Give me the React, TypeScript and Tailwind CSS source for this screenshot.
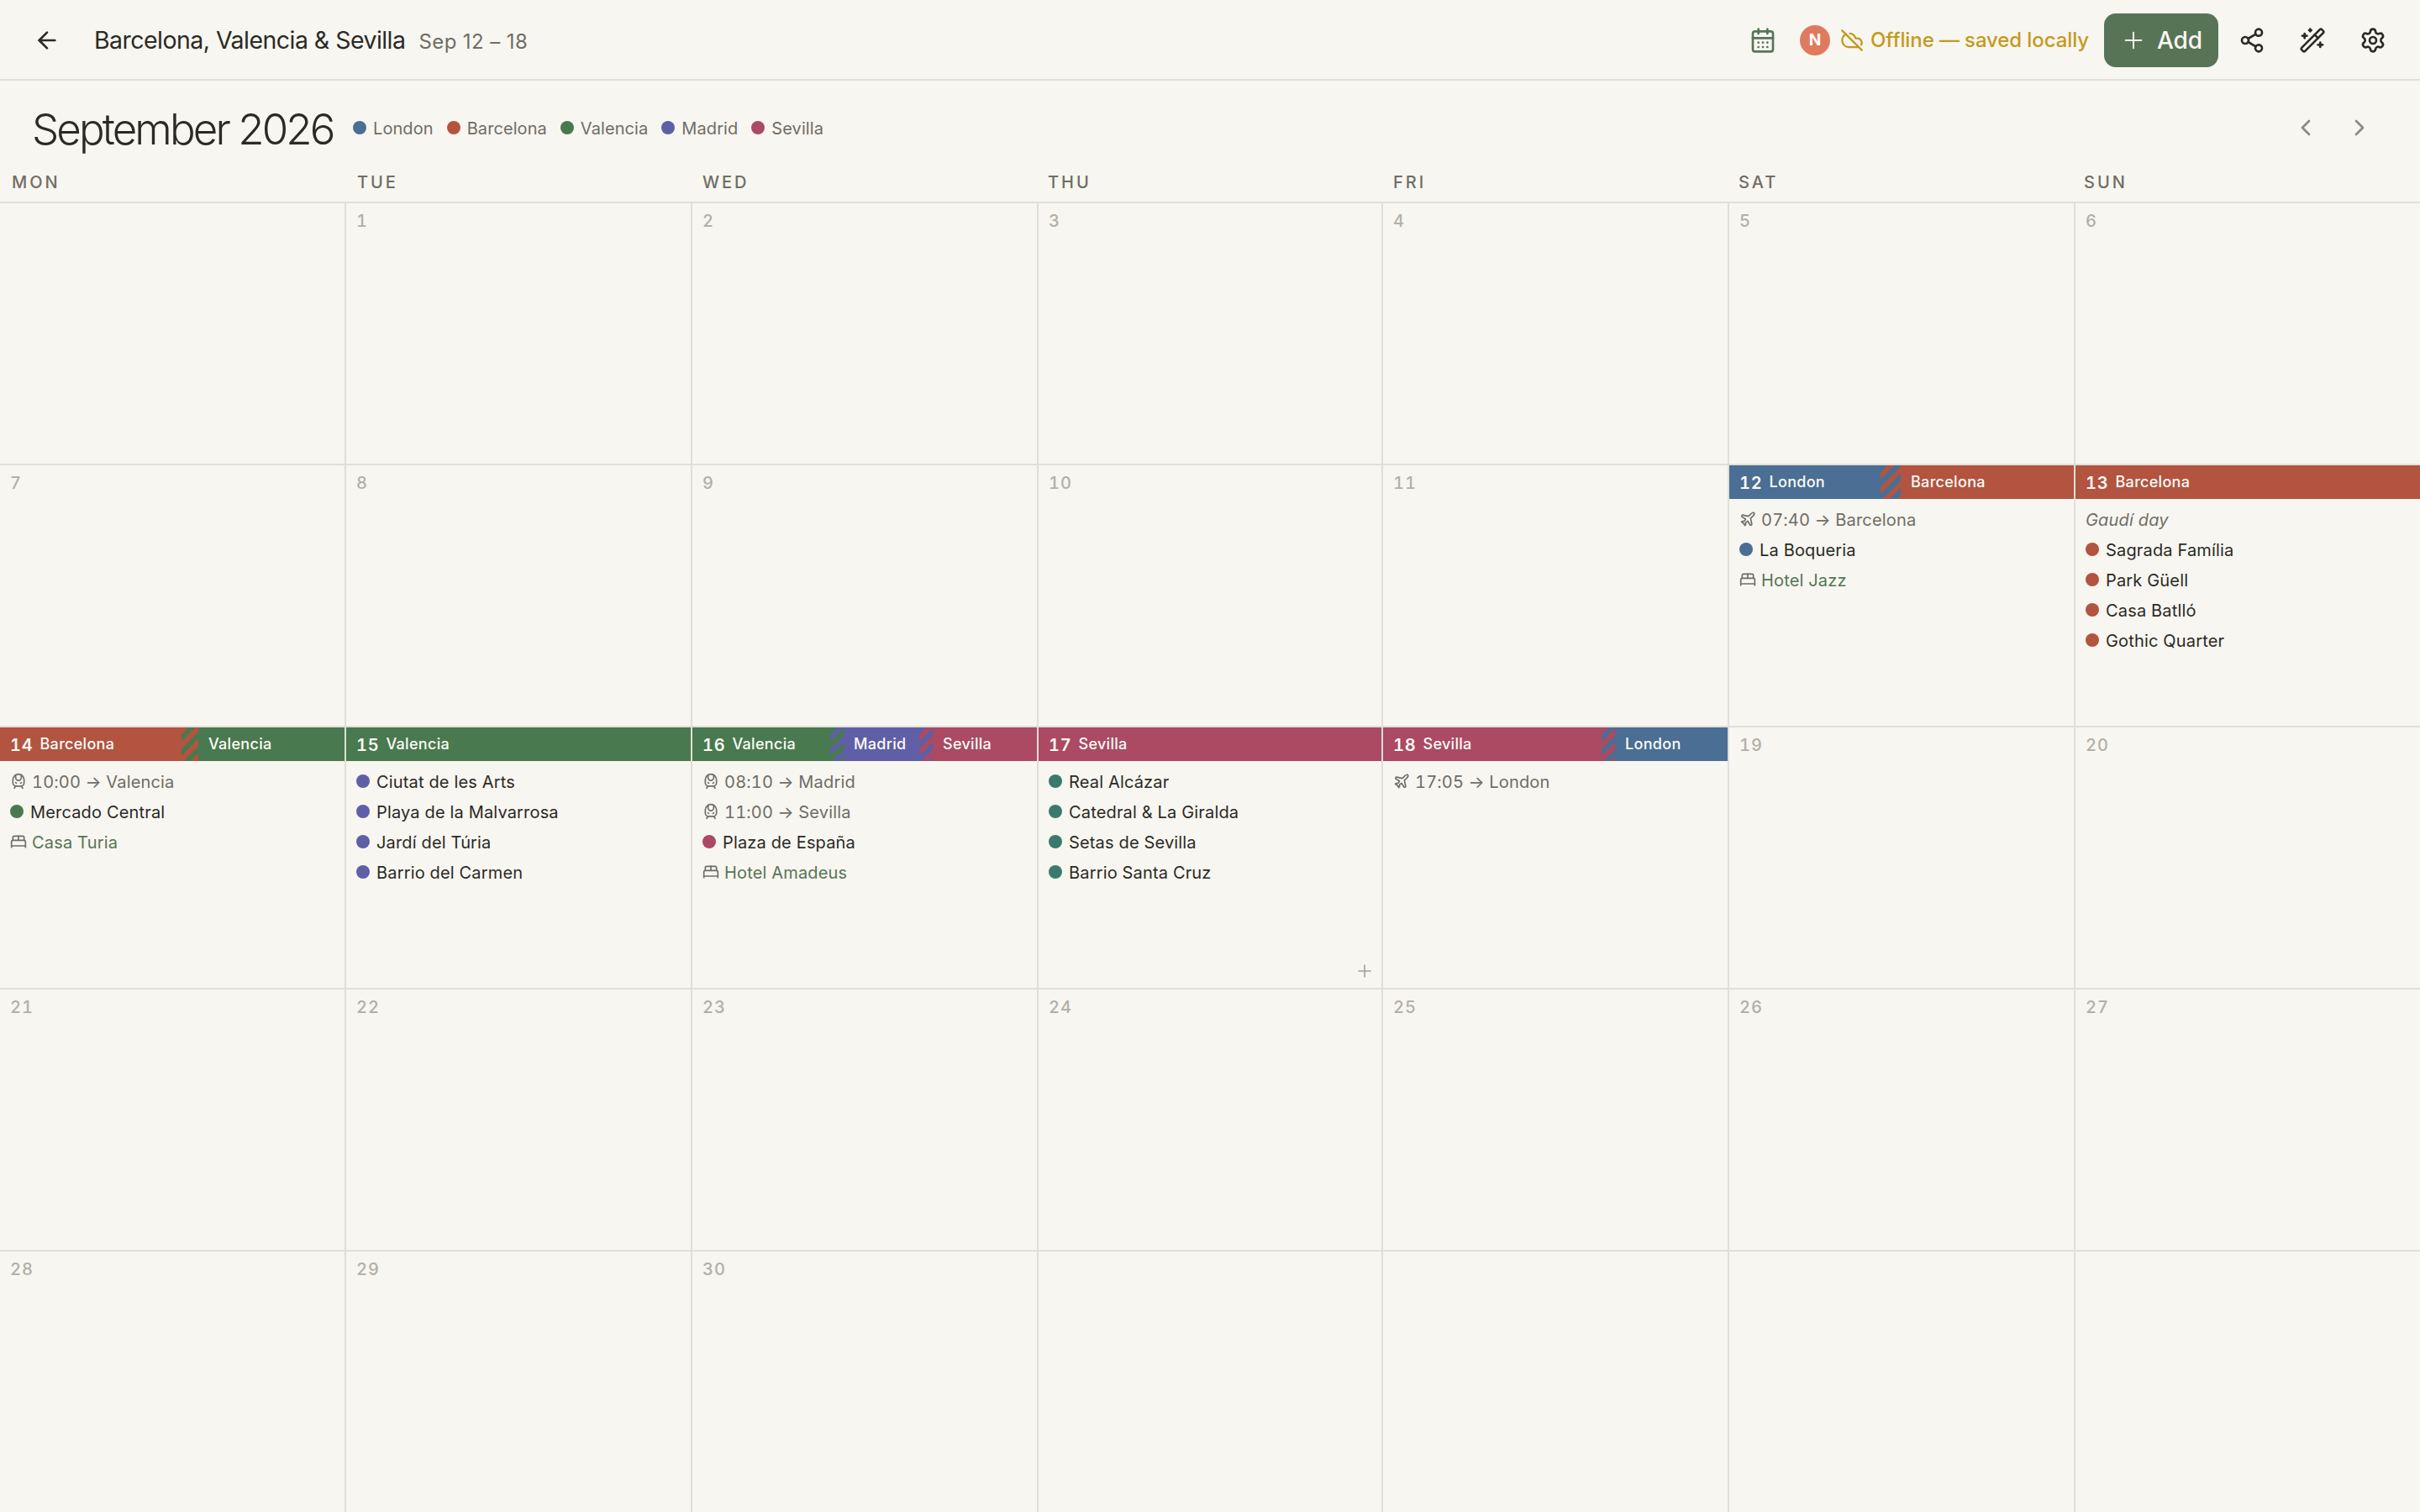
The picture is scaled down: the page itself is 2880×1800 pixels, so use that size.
import {
  ArrowLeft,
  BedDouble,
  CalendarDays,
  ChevronLeft,
  ChevronRight,
  CloudOff,
  Plane,
  Plus,
  Settings,
  Share2,
  TrainFront,
  WandSparkles,
} from "lucide-react";

type Segment = {
  city: string;
  bg: string;
  width: string;
  stripe?: string;
  from?: string;
  to?: string;
};

type Item = {
  kind: "flight" | "train" | "hotel" | "place" | "note";
  text: string;
  time?: string;
  dot?: string;
};

type TripDay = { segments: Segment[]; items: Item[] };

const blue = "bg-[#4b6e94]";
const red = "bg-[#b25440]";
const green = "bg-[#49794e]";
const purple = "bg-[#5f5fa8]";
const rose = "bg-[#ab4a62]";
const teal = "bg-[#3a7a6c]";

const weekdays = ["MON", "TUE", "WED", "THU", "FRI", "SAT", "SUN"];

const legend = [
  { name: "London", color: blue },
  { name: "Barcelona", color: red },
  { name: "Valencia", color: green },
  { name: "Madrid", color: purple },
  { name: "Sevilla", color: rose },
];

const hex = {
  blue: "#4b6e94",
  red: "#b25440",
  green: "#49794e",
  purple: "#5f5fa8",
  rose: "#ab4a62",
};

const place = (text: string, dot: string): Item => ({ kind: "place", text, dot });

const trip: Record<number, TripDay> = {
  12: {
    segments: [
      { city: "London", bg: blue, width: "w-[180px]" },
      { city: "Barcelona", bg: red, width: "flex-1", stripe: "w-[24px]", from: hex.blue, to: hex.red },
    ],
    items: [
      { kind: "flight", time: "07:40", text: "Barcelona" },
      place("La Boqueria", blue),
      { kind: "hotel", text: "Hotel Jazz" },
    ],
  },
  13: {
    segments: [{ city: "Barcelona", bg: red, width: "flex-1" }],
    items: [
      { kind: "note", text: "Gaudí day" },
      place("Sagrada Família", red),
      place("Park Güell", red),
      place("Casa Batlló", red),
      place("Gothic Quarter", red),
    ],
  },
  14: {
    segments: [
      { city: "Barcelona", bg: red, width: "w-[216px]" },
      { city: "Valencia", bg: green, width: "flex-1", stripe: "w-[20px]", from: hex.red, to: hex.green },
    ],
    items: [
      { kind: "train", time: "10:00", text: "Valencia" },
      place("Mercado Central", green),
      { kind: "hotel", text: "Casa Turia" },
    ],
  },
  15: {
    segments: [{ city: "Valencia", bg: green, width: "flex-1" }],
    items: [
      place("Ciutat de les Arts", purple),
      place("Playa de la Malvarrosa", purple),
      place("Jardí del Túria", purple),
      place("Barrio del Carmen", purple),
    ],
  },
  16: {
    segments: [
      { city: "Valencia", bg: green, width: "w-[164px]" },
      { city: "Madrid", bg: purple, width: "w-[90px]", stripe: "w-[16px]", from: hex.green, to: hex.purple },
      { city: "Sevilla", bg: rose, width: "flex-1", stripe: "w-[16px]", from: hex.purple, to: hex.rose },
    ],
    items: [
      { kind: "train", time: "08:10", text: "Madrid" },
      { kind: "train", time: "11:00", text: "Sevilla" },
      place("Plaza de España", rose),
      { kind: "hotel", text: "Hotel Amadeus" },
    ],
  },
  17: {
    segments: [{ city: "Sevilla", bg: rose, width: "flex-1" }],
    items: [
      place("Real Alcázar", teal),
      place("Catedral & La Giralda", teal),
      place("Setas de Sevilla", teal),
      place("Barrio Santa Cruz", teal),
    ],
  },
  18: {
    segments: [
      { city: "Sevilla", bg: rose, width: "w-[260px]" },
      { city: "London", bg: blue, width: "flex-1", stripe: "w-[16px]", from: hex.rose, to: hex.blue },
    ],
    items: [{ kind: "flight", time: "17:05", text: "London" }],
  },
};

function TopBar() {
  return (
    <header className="flex h-24 shrink-0 items-center border-b-2 border-[#e1dfd6] px-10 pt-0.5">
      <ArrowLeft className="size-8" strokeWidth={2} />
      <h1 className="ml-10 text-[28.5px] leading-10 tracking-[-0.54px]">
        Barcelona, Valencia &amp; Sevilla
      </h1>
      <span className="mt-1 ml-4 text-2xl tracking-[0.4px] text-[#6f6d66]">Sep 12 – 18</span>

      <div className="ml-auto flex items-center">
        <CalendarDays className="size-8 text-[#587457]" strokeWidth={2} />
        <span className="ml-7 flex size-9 items-center justify-center rounded-full bg-[#e07a5f] text-[19px] font-bold text-white">
          N
        </span>
        <div className="ml-3 flex items-center gap-2 text-[#c49a1c]">
          <CloudOff className="size-7" strokeWidth={2} />
          <span className="text-2xl font-medium tracking-[-0.1px]">Offline — saved locally</span>
        </div>
        <button className="ml-[18px] flex h-16 w-[136px] items-center justify-center gap-3 rounded-[14px] bg-[#587457] text-[28px] font-medium text-[#f9f7f2]">
          <Plus className="size-8" strokeWidth={1.5} />
          Add
        </button>
        <Share2 className="ml-6 size-8" strokeWidth={2} />
        <WandSparkles className="ml-10 size-8" strokeWidth={2} />
        <Settings className="ml-10 size-8" strokeWidth={2} />
      </div>
    </header>
  );
}

function MonthBar() {
  return (
    <div className="flex h-[108px] shrink-0 items-center pr-14 pl-[38px]">
      <h2 className="mt-1.5 w-[355px] text-[51px] leading-none font-[260] tracking-[-2.9px] whitespace-nowrap">
        September 2026
      </h2>
      <ul className="mt-1 ml-[27px] flex items-center gap-4">
        {legend.map((city) => (
          <li key={city.name} className="flex items-center gap-2">
            <span className={`size-4 rounded-full ${city.color}`} />
            <span className="mt-0.5 text-xl tracking-[0.08px] text-[#6f6d66]">{city.name}</span>
          </li>
        ))}
      </ul>
      <div className="mt-1 ml-auto flex items-center gap-8 text-[#8b8983]">
        <ChevronLeft className="size-8" strokeWidth={2} />
        <ChevronRight className="size-8" strokeWidth={2} />
      </div>
    </div>
  );
}

function CityBar({ day, segments }: { day: number; segments: Segment[] }) {
  return (
    <div className="flex h-10 text-[#fdfbf6]">
      {segments.map((seg, i) => (
        <div key={seg.city} className="contents">
          {seg.stripe && (
            <div
              className={`h-10 shrink-0 ${seg.stripe}`}
              style={{
                backgroundImage: `repeating-linear-gradient(135deg, ${seg.from} 0 6px, ${seg.to} 6px 12px)`,
              }}
            />
          )}
          <div className={`flex items-center gap-2 pl-3 ${seg.bg} ${seg.width}`}>
            {i === 0 && (
              <span className="mt-0.5 text-xl font-semibold tracking-[0.8px] tabular-nums">{day}</span>
            )}
            <span className="text-lg font-medium tracking-[0.3px]">{seg.city}</span>
          </div>
        </div>
      ))}
    </div>
  );
}

function ItemRow({ item }: { item: Item }) {
  if (item.kind === "note") {
    return <li className="h-9 pt-px leading-9 text-[#6f6d66] italic">{item.text}</li>;
  }
  if (item.kind === "place") {
    return (
      <li className="flex h-9 items-center gap-2">
        <span className={`size-4 rounded-full ${item.dot}`} />
        <span className="mt-0.5">{item.text}</span>
      </li>
    );
  }
  const Icon = item.kind === "flight" ? Plane : item.kind === "train" ? TrainFront : BedDouble;
  return (
    <li className="flex h-9 items-center gap-1.5 text-[#6f6d66]">
      <Icon className="size-5" strokeWidth={2} />
      {item.kind === "hotel" ? (
        <span className="mt-0.5 text-[#587457]">{item.text}</span>
      ) : (
        <span className="mt-0.5 tabular-nums">
          {item.time} → {item.text}
        </span>
      )}
    </li>
  );
}

function DayCell({ day }: { day: number | null }) {
  const plan = day ? trip[day] : undefined;
  return (
    <div className="relative bg-[#f7f6f0]">
      {plan && day ? (
        <>
          <CityBar day={day} segments={plan.segments} />
          <ul className="pt-1.5 pl-3 text-xl tracking-[0.16px]">
            {plan.items.map((item) => (
              <ItemRow key={item.text} item={item} />
            ))}
          </ul>
        </>
      ) : (
        <span className="block pt-[5px] pl-3 text-xl leading-8 font-medium tracking-[1px] text-[#b2b0a9] tabular-nums">
          {day}
        </span>
      )}
      {day === 17 && (
        <Plus className="absolute right-2 bottom-2 size-6 text-[#a09e97]" strokeWidth={1.6} />
      )}
    </div>
  );
}

export default function App() {
  // September 2026 starts on a Tuesday
  const days = Array.from({ length: 35 }, (_, i) => (i >= 1 && i <= 30 ? i : null));

  return (
    <div className="flex h-[1800px] w-[2880px] flex-col overflow-hidden bg-[#f7f6f0] font-[Inter,sans-serif] text-[#2b2a26]">
      <TopBar />
      <MonthBar />
      <div className="grid h-[38px] shrink-0 grid-cols-[repeat(7,411px)] border-b-2 border-[#e1dfd6]">
        {weekdays.map((name) => (
          <span key={name} className="pl-3.5 text-xl leading-[26px] font-medium tracking-[3px] text-[#6f6d66]">
            {name}
          </span>
        ))}
      </div>
      <div className="grid min-h-0 flex-1 grid-cols-[410px_410px_410px_408px_410px_410px_410px] grid-rows-5 gap-0.5 bg-[#e1dfd6]">
        {days.map((day, i) => (
          <DayCell key={i} day={day} />
        ))}
      </div>
    </div>
  );
}
